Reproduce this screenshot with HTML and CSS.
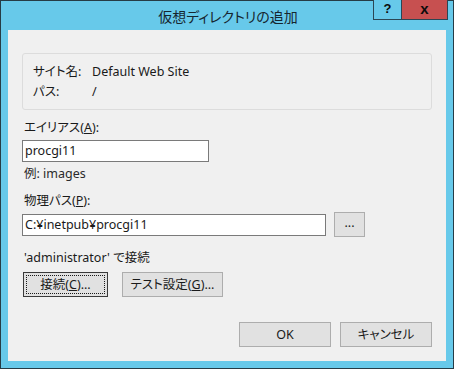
FILE: index.html
```html
<!DOCTYPE html>
<html lang="ja">
<head>
<meta charset="utf-8">
<title>仮想ディレクトリの追加</title>
<link rel="stylesheet" href="styles.css">
</head>
<body>
<div class="window">
  <div class="titlebar">
    <div class="title">仮想ディレクトリの追加</div>
    <div class="caption">
      <div class="cap-btn help">?</div>
      <div class="cap-btn close">x</div>
    </div>
  </div>
  <div class="client">
    <div class="groupbox">
      <div class="info-row"><span class="info-label">サイト名:</span><span>Default Web Site</span></div>
      <div class="info-row"><span class="info-label">パス:</span><span>/</span></div>
    </div>
    <div class="label alias-label">エイリアス(<u>A</u>):</div>
    <div class="textbox alias-box">procgi11</div>
    <div class="label example">例: images</div>
    <div class="label path-label">物理パス(<u>P</u>):</div>
    <div class="path-row">
      <div class="textbox path-box">C:¥inetpub¥procgi11</div>
      <div class="btn browse">...</div>
    </div>
    <div class="label conn-label">'administrator' で接続</div>
    <div class="conn-row">
      <div class="btn focused connect"><span class="focus-rect">接続(<u>C</u>)...</span></div>
      <div class="btn test">テスト設定(<u>G</u>)...</div>
    </div>
    <div class="footer">
      <div class="btn dlg">OK</div>
      <div class="btn dlg">キャンセル</div>
    </div>
  </div>
</div>
</body>
</html>
```

FILE: styles.css
```css
html, body {
  margin: 0;
  padding: 0;
  background: #ffffff;
}

body {
  font-family: "Noto Sans", "Noto Sans CJK JP", sans-serif;
  font-size: 12.5px;
  color: #1a1a1a;
  font-feature-settings: "palt";
}

.window {
  width: 454px;
  height: 369px;
  box-sizing: border-box;
  border: 1px solid #263c46;
  background: #67c9ea;
  display: flex;
  flex-direction: column;
}

.titlebar {
  height: 29px;
  position: relative;
  flex: none;
}

.title {
  text-align: center;
  line-height: 31px;
  font-size: 14px;
  color: #16262f;
  padding-left: 2px;
}

.caption {
  position: absolute;
  top: -1px;
  right: 5px;
  display: flex;
  height: 20px;
  box-sizing: border-box;
  border: 1px solid #2b4654;
  border-top: none;
}

.cap-btn {
  height: 19px;
  line-height: 18px;
  text-align: center;
  font-family: "Liberation Sans", sans-serif;
  font-weight: bold;
  font-size: 13px;
  color: #0b0b0b;
}

.help {
  width: 27px;
  background: #67c9ea;
  border-right: 1px solid #2b4654;
}

.close {
  width: 45px;
  background: #c75050;
  font-size: 15px;
}

.client {
  flex: 1;
  margin: 0 7px 7px 7px;
  background: #f0f0f0;
  padding: 23px 14px 0 14px;
  display: flex;
  flex-direction: column;
  align-items: flex-start;
}

.groupbox {
  align-self: stretch;
  height: 57px;
  box-sizing: border-box;
  border: 1px solid #dcdcdc;
  border-radius: 3px;
  padding: 8px 10px 0 10px;
}

.info-row {
  display: flex;
  height: 20px;
  line-height: 20px;
}

.info-label {
  width: 59px;
  flex: none;
}

.label {
  line-height: 16px;
  height: 16px;
  padding-left: 2px;
}

.alias-label {
  margin-top: 10px;
}

.textbox {
  box-sizing: border-box;
  height: 22px;
  line-height: 20px;
  border: 1px solid #7a7a7a;
  background: #ffffff;
  padding-left: 2px;
}

.alias-box {
  width: 187px;
  margin-top: 4px;
}

.example {
  margin-top: 4px;
  color: #2a2a2a;
}

.path-label {
  margin-top: 11px;
}

.path-row {
  display: flex;
  align-items: center;
  margin-top: 3px;
}

.path-box {
  width: 304px;
}

.btn {
  box-sizing: border-box;
  border: 1px solid #adadad;
  background: #e1e1e1;
  text-align: center;
  color: #1a1a1a;
}

.browse {
  width: 31px;
  height: 25px;
  line-height: 20px;
  margin-left: 8px;
}

.conn-label {
  margin-top: 13px;
}

.conn-row {
  display: flex;
  gap: 14px;
  margin-top: 6px;
  padding-left: 1px;
}

.conn-row .btn {
  height: 25px;
  line-height: 23px;
}

.connect {
  width: 85px;
  border-color: #3a3a3a;
  padding: 2px;
}

.focus-rect {
  display: block;
  height: 19px;
  line-height: 17px;
  box-sizing: border-box;
  border: 1px dotted #1a1a1a;
}

.test {
  width: 101px;
}

.footer {
  margin-top: auto;
  align-self: flex-end;
  display: flex;
  gap: 9px;
  margin-bottom: 14px;
}

.dlg {
  width: 92px;
  height: 25px;
  line-height: 23px;
}
```
